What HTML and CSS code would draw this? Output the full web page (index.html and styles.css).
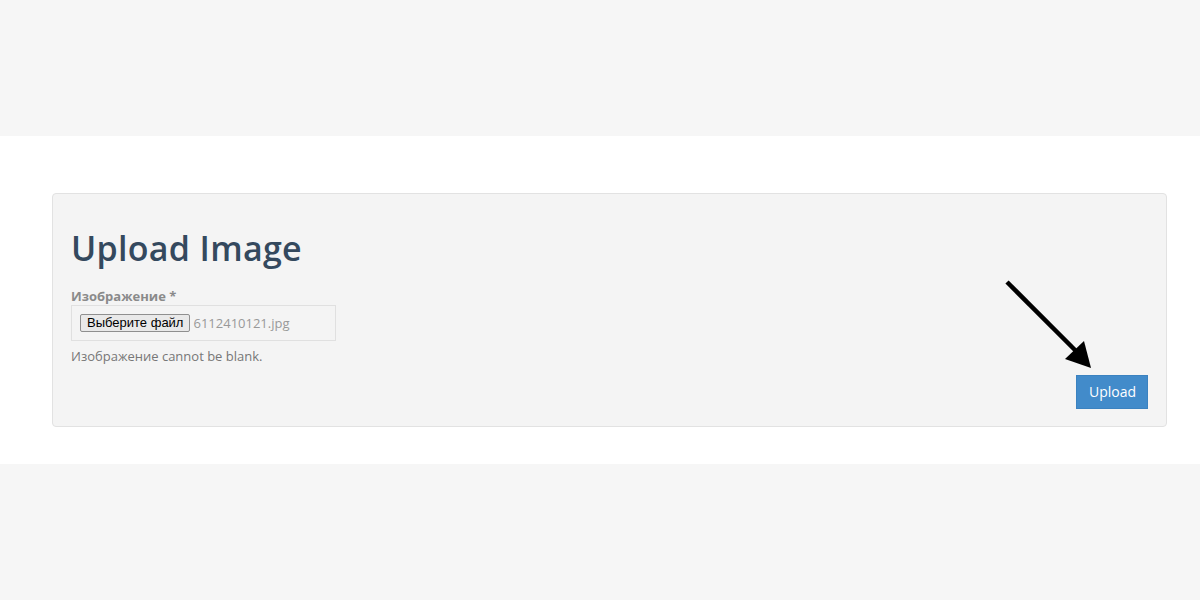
FILE: index.html
```html
<!DOCTYPE html>
<html lang="ru">
<head>
    <meta charset="UTF-8">
    <title>Upload Image</title>
    <link rel="stylesheet" href="styles.css">
</head>
<body>
    <div class="band"></div>
    <div class="main">
        <div class="panel">
            <h1>Upload Image</h1>
            <div class="field">
                <label class="label">Изображение *</label>
                <div class="filebox">
                    <span class="filebtn">Выберите файл</span>
                    <span class="filename">6112410121.jpg</span>
                </div>
                <p class="error">Изображение cannot be blank.</p>
            </div>
            <div class="actions">
                <button class="upload">Upload</button>
            </div>
            <svg class="arrow" width="100" height="100" viewBox="0 0 100 100">
                <line x1="2" y1="2" x2="72" y2="72" stroke="#000" stroke-width="4.5"/>
                <polygon points="86,88 60,79 79,61" fill="#000"/>
            </svg>
        </div>
    </div>
    <div class="band"></div>
</body>
</html>
```
FILE: styles.css
```css
body { margin: 0; font-family: "Open Sans", "Liberation Sans", sans-serif; background: #f6f6f6; }
.band { height: 136px; background: #f6f6f6; }
.main { height: 328px; background: #fff; padding: 57px 33px 0 52px; box-sizing: border-box; }
.panel { position: relative; height: 234px; box-sizing: border-box; background: #f4f4f4; border: 1px solid #e2e2e2; border-radius: 4px; padding: 29px 18px 0 18px; }
h1 { margin: 0; font-family: "Open Sans", sans-serif; font-weight: 600; font-size: 34px; color: #34495e; line-height: 50px; letter-spacing: 0.3px; }
.field { margin-top: 15px; }
.label { display: block; font-size: 13px; font-weight: bold; color: #8a8a8a; line-height: 16px; }
.filebox { width: 265px; height: 36px; box-sizing: border-box; border: 1px solid #e0e0e0; margin-top: 1px; display: flex; align-items: center; padding-left: 8px; }
.filebtn { font-family: "Liberation Sans", Arial, sans-serif; font-size: 13px; color: #000; background: #e9e9e9; border: 1px solid #8f8f8f; border-radius: 2px; padding: 1px 6px; line-height: 14px; }
.filename { font-size: 13px; color: #999; margin-left: 3px; }
.error { margin: 6px 0 0; font-size: 13px; color: #777; line-height: 18px; }
.actions { position: absolute; right: 18px; top: 181px; }
.upload { background: #428bca; color: #fff; border: 1px solid #3b82c0; font-family: "Open Sans", sans-serif; font-size: 14px; padding: 0 12px 2px; height: 34px; width: 72px; }
.arrow { position: absolute; left: 952px; top: 86px; }
```
